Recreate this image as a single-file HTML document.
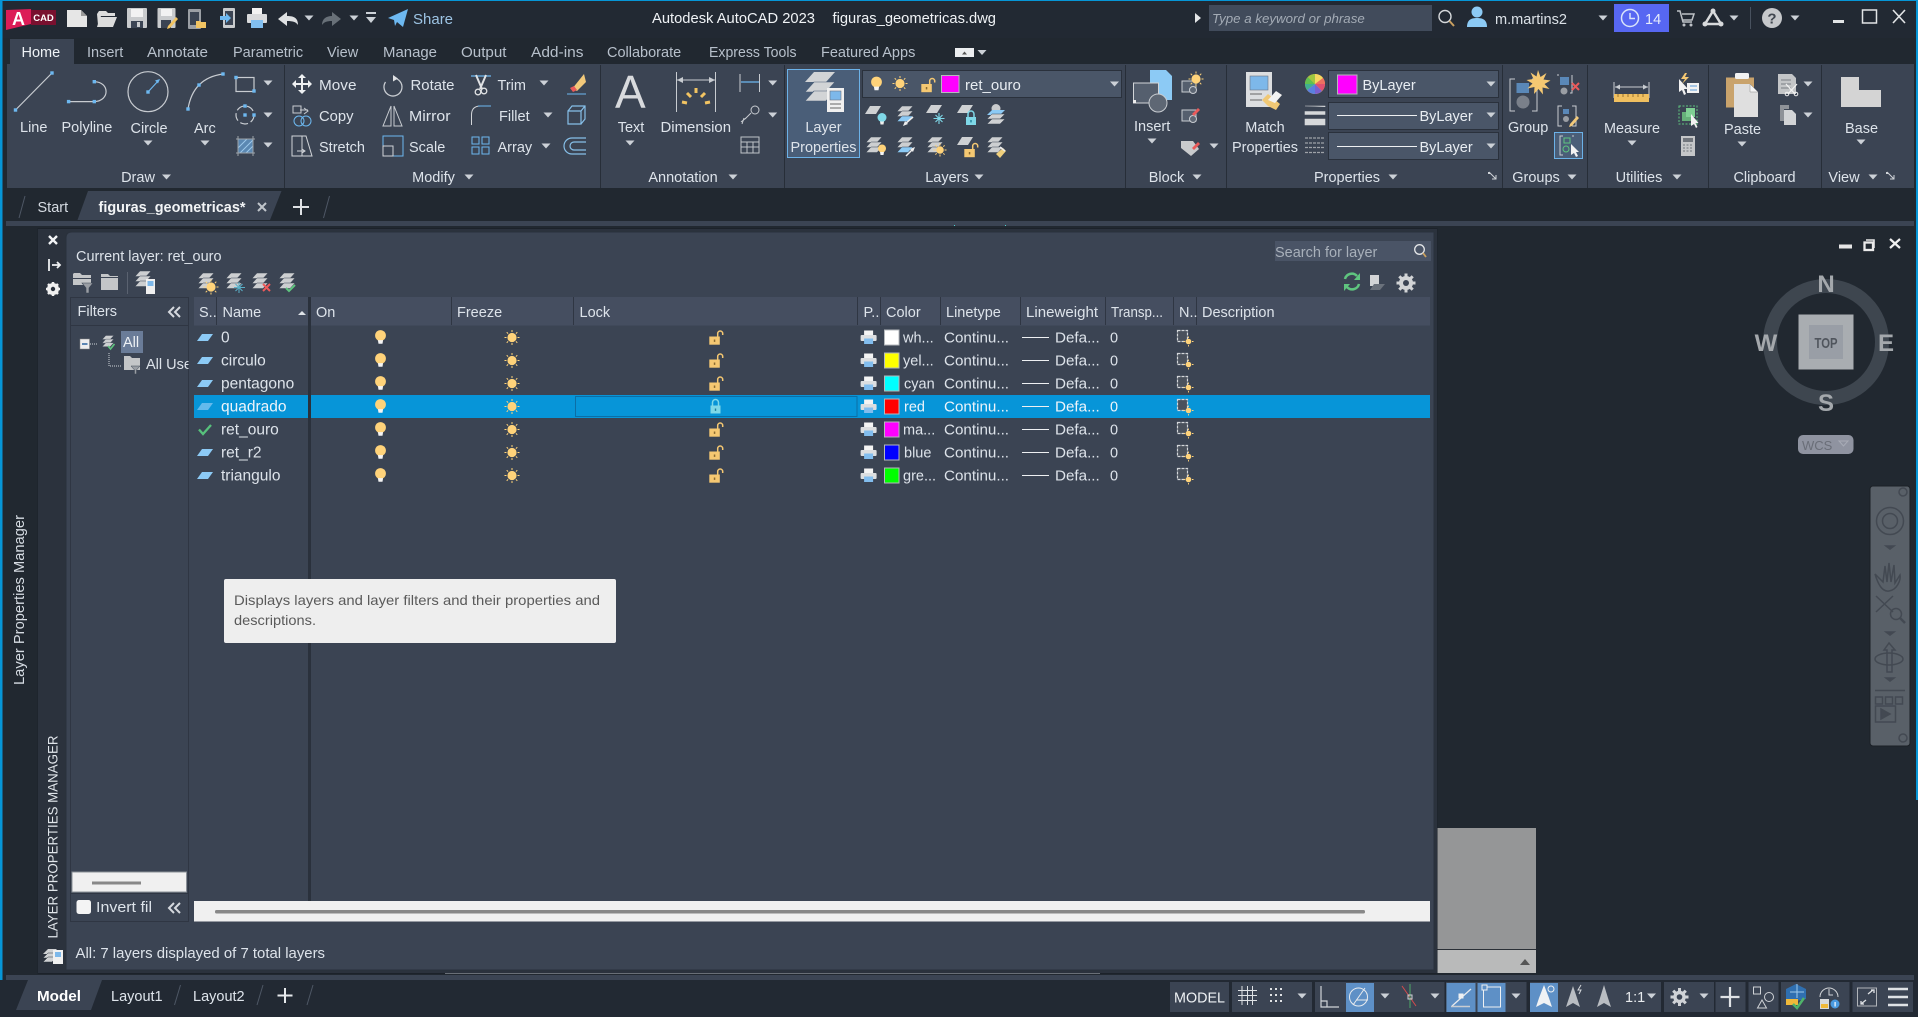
<!DOCTYPE html>
<html><head><meta charset="utf-8"><title>Autodesk AutoCAD 2023</title>
<style>
html,body{margin:0;padding:0;background:#212830;overflow:hidden}
svg{display:block;position:absolute;left:0;top:0}
text{font-family:"Liberation Sans",sans-serif;font-size:14.5px;fill:#dde3ea;white-space:pre}
.m{text-anchor:middle}
.b{font-weight:bold;fill:#fff}
.g{stroke:#c8ccd1;fill:none;stroke-width:1.2}
.n{font-size:15.5px}
.c{font-size:15.2px}
</style></head><body>
<svg width="1918" height="1017" viewBox="0 0 1918 1017" xmlns="http://www.w3.org/2000/svg">
<defs>
<clipPath id="c1"><rect x="140" y="350" width="48.5" height="30"/></clipPath>
<path id="dd" d="M-4.500-2.500h9l-4.500 5z" fill="#ccd1d7"/>
<rect id="bs" x="-1.7" y="-1.7" width="3.4" height="3.4" fill="#6db8f0"/>
<g id="bulb"><circle cy="-2" r="5.4" fill="#ffd37a"/><path d="M-2.6 2.6h5.2l-.6 3.6h-4z" fill="#f4f4f4"/></g>
<g id="sun"><circle r="4.6" fill="#ffd37a"/><path d="M0-7.5v2M0 5.5v2M-7.5 0h2M5.5 0h2M-5.3-5.3l1.4 1.4M3.9 3.9l1.4 1.4M-5.3 5.3l1.4-1.4M3.9-3.9l1.4-1.4" stroke="#ffd37a" stroke-width="1"/></g>
<g id="lock"><path d="M1.7-1V-4a2.500 2.500 0 0 1 5 0V-2.500" fill="none" stroke="#f5c872" stroke-width="1.500"/><rect x="-6.700" y="-1" width="10.500" height="8.200" fill="#f5c872"/><rect x="-2.200" y="2" width="1.500" height="2.400" fill="#8a6a30"/></g>
<g id="lockc"><path d="M-3-1V-4a3 3 0 0 1 6 0V-1" fill="none" stroke="#7fd8e8" stroke-width="1.500"/><rect x="-5" y="-1" width="10" height="8" fill="#7fd8e8"/><rect x="-.7" y="2" width="1.400" height="2.400" fill="#207f9a"/></g>
<g id="prn"><rect x="-4.500" y="-7" width="9" height="5" fill="#f4f4f4"/><rect x="-8" y="-2.500" width="16" height="6" rx="1" fill="#dcdee0"/><rect x="-4.500" y="1" width="9" height="5.500" fill="#82bdee"/></g>
<g id="nic"><path d="M-7-7h10v11h-10z" fill="#4a515c" stroke="#d4d7da" stroke-width="1.200" stroke-dasharray="3 1"/><g transform="translate(4 4)"><circle r="2.800" fill="#ffd37a"/><path d="M0-5v1.500M0 3.500v1.500M-5 0h1.500M3.500 0h1.500" stroke="#ffd37a" stroke-width=".9"/></g></g>
<path id="chip" d="M-8 3.500L-3-3.500H8L3 3.500z" fill="#8ccaf5"/>
<g id="ri"><use href="#bulb" x="380.500"/><use href="#sun" x="512"/><use href="#prn" x="868.600"/><path d="M1022 0h27" stroke="#eef0f2" stroke-width="1"/><use href="#nic" x="1184.500"/></g>
<g id="st" fill="#cdcfd1" stroke="#3b4453" stroke-width=".5"><path d="M-8-3.500L-3-9H8L3-3.500z"/><path d="M-8 1.500L-3-4H8L3 1.500z"/><path d="M-8 6.500L-3 1H8L3 6.500z"/></g>
<path id="pg" d="M-8 4L-3-4H8L3 4z" fill="#cfd1d3"/>
</defs>

<!-- base -->
<rect width="1918" height="1017" fill="#212830"/>
<rect width="1918" height="38" fill="#222933"/>

<!-- title bar icons -->
<path d="M6 10l25-1v15l-25 6z" fill="#dc1c57"/><rect x="31" y="10" width="25" height="15" fill="#79102f"/>
<text x="18.500" y="25" class="m b" style="font-size:18px">A</text><text x="43.500" y="21" class="m b" style="font-size:9.500px">CAD</text>
<path d="M67 10h14l6 6v11H67z" fill="#e6e6e6"/><path d="M81 10l6 6h-6z" fill="#9a9a9a"/>
<path d="M97 14l2-3h7l2 2h7v3h-14l-3 9z M100 17h17l-4 10H97z" fill="#dcdcdc"/>
<rect x="127" y="8" width="20" height="20" rx="1" fill="#c9cbcd"/><rect x="131" y="9" width="12" height="8" fill="#f2f2f2"/><rect x="131" y="21" width="12" height="7" fill="#3b4453"/><rect x="137" y="22" width="3" height="5" fill="#c9cbcd"/>
<rect x="157.500" y="8" width="18" height="20" rx="1" fill="#c9cbcd"/><rect x="161" y="9" width="11" height="7" fill="#f2f2f2"/><rect x="161" y="20" width="10" height="8" fill="#3b4453"/><path d="M168 26l8-9 2 2-8 9-3 1z" fill="#f2c462"/>
<rect x="188" y="9" width="13" height="20" rx="1" fill="#9b9fa5"/><rect x="190" y="12" width="9" height="13" fill="#3b4453"/><path d="M196 21h4l1 1h5v6h-10z" fill="#f2c462"/>
<rect x="223" y="8" width="12" height="20" rx="1" fill="#c9cbcd"/><rect x="225" y="11" width="8" height="14" fill="#3b4453"/><path d="M220 16h6v-3l5 5-5 5v-3h-6z" fill="#6db8f0"/>
<rect x="252" y="8" width="10" height="6" fill="#f2f2f2"/><rect x="247" y="14" width="20" height="9" rx="1" fill="#d9dadc"/><rect x="251" y="20" width="12" height="8" fill="#82bff0"/>
<path d="M278 19l9-7v4c7 0 11 2 11 9-2-3-5-4-11-4v5z" fill="#dfe1e3"/><use href="#dd" x="309" y="18"/>
<path d="M341 19l-9-7v4c-6 0-10 3-10 9 2-3 5-4 10-4v5z" fill="#687078"/><use href="#dd" x="354" y="18"/>
<path d="M366 12h10v2h-10zM366 17h10l-5 6z" fill="#ccd1d7"/>
<path d="M388 18L408 9l-5 18-6-5-2 4-1-6z" fill="#6db8f0"/>
<text x="413" y="24" style="fill:#9dc4e4;font-size:15px">Share</text>
<text x="652" y="23" textLength="163" lengthAdjust="spacingAndGlyphs" style="fill:#f0f3f6">Autodesk AutoCAD 2023</text>
<text x="832.500" y="23" textLength="163.500" lengthAdjust="spacingAndGlyphs" style="fill:#f0f3f6">figuras_geometricas.dwg</text>
<path d="M1195 13l6 5-6 5z" fill="#e4e6e8"/>
<rect x="1209" y="5" width="223" height="26" fill="#414b5b"/>
<text x="1212" y="23" style="font-style:italic;font-size:13.300px;fill:#a3abb5">Type a keyword or phrase</text>
<circle cx="1445" cy="16.500" r="6" fill="none" stroke="#d5d8db" stroke-width="1.400"/><path d="M1449.500 21l4.500 5" stroke="#c9a060" stroke-width="2"/>
<circle cx="1477" cy="12" r="5.500" fill="#8ccaf5"/><path d="M1467 27c0-7 4-9 10-9s10 2 10 9z" fill="#8ccaf5"/>
<text x="1495" y="24" textLength="72" lengthAdjust="spacingAndGlyphs" style="fill:#dbe1e7">m.martins2</text><use href="#dd" x="1603" y="18"/>
<rect x="1614" y="4" width="55" height="28" fill="#5767f2"/><circle cx="1630" cy="18" r="8.500" fill="none" stroke="#d9e4fa" stroke-width="1.500"/><path d="M1630 13v5.500h5" fill="none" stroke="#d9e4fa" stroke-width="1.500"/>
<text x="1645" y="24" style="fill:#e6ecfb">14</text>
<path d="M1677 11h3l3 11h9M1682 14h12l-2 6h-9" fill="none" stroke="#bdc1c6" stroke-width="1.500"/><circle cx="1684" cy="25" r="1.500" fill="#bdc1c6"/><circle cx="1691" cy="25" r="1.500" fill="#bdc1c6"/>
<path d="M1713 11l-8 13h16z" fill="none" stroke="#d8dadc" stroke-width="2.500"/><circle cx="1713" cy="11" r="2.500" fill="#d8dadc"/><circle cx="1705" cy="24" r="2.500" fill="#d8dadc"/><circle cx="1721" cy="24" r="2.500" fill="#d8dadc"/><use href="#dd" x="1734" y="18"/>
<path d="M1750.500 7v22" stroke="#48515e"/>
<circle cx="1772" cy="18" r="10" fill="#c6c8cb"/><text x="1772" y="23.500" class="m b" style="fill:#40464f;font-size:15px">?</text><use href="#dd" x="1795" y="18"/>
<rect x="1833" y="20" width="11" height="3" fill="#e2e4e6"/><rect x="1862.500" y="10" width="14" height="13" fill="none" stroke="#e2e4e6" stroke-width="1.500"/>
<path d="M1893 10l12 13M1905 10l-12 13" stroke="#e2e4e6" stroke-width="1.600"/>

<!-- ribbon tabs -->
<rect x="10" y="39" width="64" height="26" fill="#3b4453"/>
<text x="21.500" y="57" style="fill:#eef2f6">Home</text>
<text x="87" y="57" style="fill:#b7c0cb">Insert</text>
<text x="147" y="57" textLength="61" lengthAdjust="spacingAndGlyphs" style="fill:#b7c0cb">Annotate</text>
<text x="233" y="57" style="fill:#b7c0cb">Parametric</text>
<text x="327" y="57" style="fill:#b7c0cb">View</text>
<text x="383" y="57" textLength="54" lengthAdjust="spacingAndGlyphs" style="fill:#b7c0cb">Manage</text>
<text x="461" y="57" textLength="45.500" lengthAdjust="spacingAndGlyphs" style="fill:#b7c0cb">Output</text>
<text x="531" y="57" textLength="52.500" lengthAdjust="spacingAndGlyphs" style="fill:#b7c0cb">Add-ins</text>
<text x="607" y="57" style="fill:#b7c0cb">Collaborate</text>
<text x="709" y="57" textLength="87.500" lengthAdjust="spacingAndGlyphs" style="fill:#b7c0cb">Express Tools</text>
<text x="821" y="57" style="fill:#b7c0cb">Featured Apps</text>
<rect x="955" y="48" width="19" height="9" fill="#eceef0"/><path d="M962 54.500l2.500-3 2.500 3z" fill="#555"/><use href="#dd" x="982" y="52.500"/>

<!-- ribbon body -->
<rect x="7" y="64" width="1907" height="124" fill="#3b4453"/>
<path d="M284.500 65v123M600.500 65v123M784.500 65v123M1125.500 65v123M1226.500 65v123M1502.500 65v123M1587.500 65v123M1708.500 65v123M1821.500 65v123" stroke="#272e38" stroke-width="1"/>

<!-- draw -->
<path d="M15.500 110L52 73" class="g"/><use href="#bs" x="15.500" y="110"/><use href="#bs" x="52" y="73"/>
<text x="20" y="132">Line</text>
<path d="M68.600 101.600H94.300C110 101 110 82 94.300 81.700" class="g"/><use href="#bs" x="68.600" y="101.600"/><use href="#bs" x="94.300" y="101.600"/><use href="#bs" x="94.300" y="81.700"/>
<text x="61.500" y="132">Polyline</text>
<circle cx="148" cy="91.700" r="20" class="g"/><path d="M148 92l11-12" stroke="#6db8f0" stroke-width="1.200"/><use href="#bs" x="148" y="92"/><path d="M160 79l-5 1.500 3 3z" fill="#6db8f0"/>
<text x="130.500" y="133" textLength="37" lengthAdjust="spacingAndGlyphs">Circle</text><use href="#dd" x="148" y="143"/>
<path d="M188 109Q193 78 223 74" class="g"/><use href="#bs" x="188" y="109"/><use href="#bs" x="199" y="85"/><use href="#bs" x="223" y="74"/>
<text x="194" y="133">Arc</text><use href="#dd" x="205" y="143"/>
<rect x="236" y="77.500" width="18" height="14" class="g"/><use href="#bs" x="236" y="77.500"/><use href="#bs" x="254" y="91"/><use href="#dd" x="268" y="83"/>
<circle cx="245" cy="115" r="9" class="g" stroke-dasharray="8 3"/><use href="#bs" x="245" y="115"/><use href="#bs" x="245" y="106"/><use href="#bs" x="254" y="115"/><use href="#dd" x="268" y="115"/>
<rect x="238" y="139" width="15" height="14" fill="#5b88b2"/><path d="M238 148l9-9M240 153l13-13M246 153l7-7" stroke="#9cc8ea"/><path d="M236 139h19M236 153h19M238 136v20M253 136v20" stroke="#9ea4aa"/><use href="#dd" x="268" y="145"/>
<!-- modify -->
<path d="M302 74l4 4h-3v5h5v-3l4 4-4 4v-3h-5v5h3l-4 4-4-4h3v-5h-5v3l-4-4 4-4v3h5v-5h-3z" fill="#eef0f2"/>
<text x="319" y="90" textLength="37.500" lengthAdjust="spacingAndGlyphs">Move</text>
<path d="M293 106h8v7h-8zM304 108l4 3-4 3M300 110h8" fill="none" stroke="#c8ccd1"/><circle cx="299" cy="121" r="5" fill="none" stroke="#6db8f0"/><circle cx="306" cy="121" r="5" fill="none" stroke="#6db8f0"/>
<text x="319" y="121" textLength="34.500" lengthAdjust="spacingAndGlyphs">Copy</text>
<path d="M292 136h10v20h-10zM302 136h4l6 20h-10" fill="none" stroke="#d2d5d9"/><path d="M297 151h8m-3-2l3 2-3 2" fill="none" stroke="#d2d5d9"/>
<text x="319" y="152">Stretch</text>
<path d="M393 78a9 9 0 1 1-7.500 4" fill="none" stroke="#c8ccd1" stroke-width="1.300"/><path d="M393 75l5 3.500-5 3z" fill="#e0e2e4"/>
<text x="410.500" y="90" textLength="44" lengthAdjust="spacingAndGlyphs">Rotate</text>
<path d="M391 106v20h-8zM394 106v20h8z" fill="none" stroke="#c8ccd1"/>
<text x="409" y="121" textLength="41.500" lengthAdjust="spacingAndGlyphs">Mirror</text>
<rect x="383" y="136" width="20" height="20" fill="none" stroke="#6db8f0"/><rect x="383" y="146" width="10" height="10" fill="none" stroke="#d2d5d9"/>
<text x="409" y="152">Scale</text>
<path d="M471 76h20" stroke="#6db8f0" stroke-width="1.300"/><path d="M476 75l6 14M486 75l-6 14" stroke="#e0e2e4" stroke-width="2"/><circle cx="478" cy="92" r="2.800" fill="none" stroke="#e0e2e4" stroke-width="1.300"/><circle cx="484" cy="91" r="2.800" fill="none" stroke="#e0e2e4" stroke-width="1.300"/>
<text x="497.500" y="90">Trim</text><use href="#dd" x="544" y="83"/>
<path d="M471.500 125v-10q0-9 9-9h10.500" fill="none" stroke="#d2d5d9"/><path d="M478 106h13" stroke="#6db8f0"/>
<text x="499" y="121">Fillet</text><use href="#dd" x="548" y="115"/>
<path d="M472 137h7v7h-7zM482 137h7v7h-7zM472 147h7v7h-7zM482 147h7v7h-7z" fill="none" stroke="#6db8f0"/>
<text x="497.500" y="152">Array</text><use href="#dd" x="546" y="146"/>
<path d="M572 89l12-15 2 8-9 9z" fill="#f2c97a"/><path d="M570 88l4-2 3 4-4 2z" fill="#e95a5a"/><path d="M567 94h19" stroke="#6db8f0"/>
<path d="M568 111h13v13h-13zM568 111l4-5h13v13l-4 5M581 111l4-5" fill="none" stroke="#86bfe8" stroke-width="1.200"/>
<path d="M586 142h-12a4 4 0 0 0 0 8h12M586 138h-14a8 8 0 0 0 0 16h14" fill="none" stroke="#86bfe8" stroke-width="1.200"/>
<!-- annotation -->
<text x="615" y="108" style="font-size:46px;fill:#d8dadd">A</text>
<text x="631" y="132" class="m">Text</text><use href="#dd" x="630" y="143"/>
<path d="M676.500 72v40M715.500 72v40" stroke="#c8ccd1"/><path d="M677 80h38" stroke="#c8ccd1"/><path d="M677 80l6-3v6zM715 80l-6-3v6z" fill="#c8ccd1"/>
<g stroke="#f2c462" stroke-width="3"><path d="M687 103l-5-1M691 97l-4-4M696 93v-5M701 97l4-4M705 103l5-1"/></g>
<text x="660.500" y="132" textLength="70.500" lengthAdjust="spacingAndGlyphs">Dimension</text>
<path d="M740 74v18M759.500 74v18" stroke="#c8ccd1"/><path d="M741 82h18" stroke="#6db8f0" stroke-width="1.300"/><use href="#dd" x="772.700" y="83"/>
<path d="M741 122l5-4" stroke="#c8ccd1"/><path d="M742 124l2-6" stroke="#c8ccd1"/><circle cx="755" cy="110" r="4" fill="none" stroke="#c8ccd1"/><path d="M751 113l-6 6" stroke="#c8ccd1"/><use href="#dd" x="772.700" y="115"/>
<path d="M741 137h18v16h-18zM741 142h18M741 147h18M747 142v11M753 142v11" fill="none" stroke="#bfc3c8"/>
<text x="683" y="182" class="m">Annotation</text><use href="#dd" x="733" y="177"/>
<!-- layers -->
<rect x="787.500" y="69.500" width="72" height="88" fill="#4a5e78" stroke="#6cb2e8"/>
<g transform="translate(820 78) scale(1.500 1)"><path d="M-10 4L-4-6H10L4 4z" fill="#d2d4d6"/></g><g transform="translate(820 88) scale(1.500 1)"><path d="M-10 4L-4-6H10L4 4z" fill="#d2d4d6" stroke="#4a5e78" stroke-width=".6"/></g><g transform="translate(820 97) scale(1.500 1)"><path d="M-10 4L-4-6H10L4 4z" fill="#d2d4d6" stroke="#4a5e78" stroke-width=".6"/></g>
<rect x="827" y="88" width="17" height="24" fill="#f0f0f0"/><rect x="830" y="91" width="11" height="9" fill="#7db8ea" stroke="#6b7280" stroke-width=".6"/><path d="M830 104h11M830 108h11" stroke="#666"/>
<text x="823.500" y="132" class="m">Layer</text><text x="823.500" y="152" class="m" textLength="66" lengthAdjust="spacingAndGlyphs">Properties</text>
<rect x="862.500" y="70.500" width="259" height="27" fill="#4a5668" stroke="#2a313c"/>
<use href="#bulb" x="876.500" y="84"/><use href="#sun" x="900" y="83.500"/><use href="#lock" x="928" y="85"/>
<rect x="941.500" y="75.500" width="17.500" height="17" fill="#f0f" stroke="#b5b9bd"/>
<text x="965" y="90" style="font-size:15px;fill:#e8edf2">ret_ouro</text><use href="#dd" x="1114.500" y="84"/>
<!-- layer row 2 -->
<use href="#pg" x="873" y="110"/><g transform="translate(882 117.500)"><circle r="4.500" fill="#7fd8e8"/><path d="M-2 4h4l-.5 3h-3z" fill="#eee"/></g>
<g transform="translate(905 115)"><path d="M-8-3.500L-3-9H8L3-3.500z" fill="#cdcfd1" stroke="#3b4453" stroke-width=".5"/><path d="M-8 1.500L-3-4H8L3 1.500z" fill="#cdcfd1" stroke="#3b4453" stroke-width=".5"/><path d="M-8 6.500L-3 1H8L3 6.500z" fill="#8ccaf5" stroke="#3b4453" stroke-width=".5"/></g><path d="M905 124l8-7" stroke="#eee" stroke-width="1.500"/><path d="M903 126l2-5 3 3z" fill="#eee"/>
<use href="#pg" x="934" y="109"/><path d="M939 113v11M933.500 118.500h11M935.500 115l7 7M942.500 115l-7 7" stroke="#7fd8e8" stroke-width="1.100"/>
<use href="#pg" x="965" y="109"/><use href="#lockc" x="971" y="118"/>
<circle cx="996" cy="108.500" r="4.500" fill="#c9cbcd"/><g transform="translate(996 116)"><path d="M-9-1L-4-6H9L4-1z" fill="#8ccaf5"/><path d="M-9 3L-4-2H9L4 3z" fill="#cfd1d3" stroke="#3b4453" stroke-width=".5"/><path d="M-9 8L-4 3H9L4 8z" fill="#cfd1d3" stroke="#3b4453" stroke-width=".5"/></g>
<!-- layer row 3 -->
<use href="#st" x="874" y="146"/><g transform="translate(882 149)"><circle r="4" cy="-.5" fill="#ffd37a"/><path d="M-2 3h4l-.5 3h-3z" fill="#f4f4f4"/></g>
<g transform="translate(905 146)"><path d="M-8-3.500L-3-9H8L3-3.500z" fill="#cdcfd1" stroke="#3b4453" stroke-width=".5"/><path d="M-8 1.500L-3-4H8L3 1.500z" fill="#cdcfd1" stroke="#3b4453" stroke-width=".5"/><path d="M-8 6.500L-3 1H8L3 6.500z" fill="#8ccaf5" stroke="#3b4453" stroke-width=".5"/></g><path d="M906 156l7-7" stroke="#eee" stroke-width="1.500"/><path d="M915 147l-2 5-3-3z" fill="#eee"/>
<use href="#st" x="935" y="146"/><g transform="translate(940 150)"><circle r="3.800" fill="#ffd37a"/><path d="M0-6.500v2M0 4.500v2M-6.500 0h2M4.500 0h2M-4.600-4.600l1.300 1.300M3.300 3.300l1.300 1.300M-4.600 4.600l1.300-1.300M3.300-3.300l1.300-1.300" stroke="#ffd37a"/></g>
<use href="#pg" x="965" y="141"/><use href="#lock" x="971" y="150"/>
<use href="#st" x="995" y="146"/><path d="M996 154l7-6 3 3-6 7z" fill="#f0d07c"/><path d="M1000 147l5 4" stroke="#eee" stroke-width="1.500"/>
<text x="947" y="182" class="m">Layers</text><use href="#dd" x="979" y="177"/>
<!-- block -->
<path d="M1150 70h16l6 6v24h-22z" fill="#8ccaf5"/><rect x="1133.500" y="83" width="25" height="20" fill="#555f6e" stroke="#d2d5d8"/><rect x="1133" y="100" width="3" height="3" fill="#eee"/><circle cx="1158" cy="103" r="9" fill="#5e6774" stroke="#c8ccd1"/>
<text x="1134" y="131">Insert</text><use href="#dd" x="1152" y="141"/>
<rect x="1182" y="81" width="14" height="11" fill="#555f6e" stroke="#c8ccd1"/><circle cx="1193" cy="90" r="3.500" fill="#5e6774" stroke="#c8ccd1"/><use href="#sun" x="1196" y="79"/>
<rect x="1182" y="110" width="14" height="11" fill="#555f6e" stroke="#c8ccd1"/><circle cx="1193" cy="119" r="3.500" fill="#5e6774" stroke="#c8ccd1"/><path d="M1192 114l6-6 2 2-6 6z" fill="#e95a5a"/>
<path d="M1181 141h12l6 8-8 7-10-8z" fill="#c9cbcd"/><path d="M1192 148l6-6 2 2-6 6z" fill="#e95a5a"/><use href="#dd" x="1214" y="146"/>
<text x="1166.500" y="182" class="m">Block</text><use href="#dd" x="1197" y="177"/>
<!-- properties -->
<rect x="1246" y="72" width="26" height="35" fill="#dcdee0"/><rect x="1250" y="76" width="18" height="14" fill="#7db8ea" stroke="#6b7280" stroke-width=".6"/><path d="M1250 94h12M1250 100h12" stroke="#666"/><path d="M1268 106l-6-6 6-6 12 10-4 6z" fill="#f0c875"/><path d="M1268 100l8-9 6 4-7 8z" fill="#f2f2f2"/>
<text x="1265" y="132" class="m">Match</text><text x="1265" y="152" class="m">Properties</text>
<circle cx="1315" cy="84" r="10" fill="#f0b24a"/><path d="M1315 84V74a10 10 0 0 1 8 4z" fill="#f7d860"/><path d="M1315 84l8-6a10 10 0 0 1 2 6z" fill="#ee7060"/><path d="M1315 84h10a10 10 0 0 1-3 7z" fill="#e05070"/><path d="M1315 84l7 7a10 10 0 0 1-7 3z" fill="#7a60d0"/><path d="M1315 84v10a10 10 0 0 1-8-4z" fill="#5a80e0"/><path d="M1315 84l-8 6a10 10 0 0 1-2-6z" fill="#40b090"/><path d="M1315 84h-10a10 10 0 0 1 3-7z" fill="#60c050"/><path d="M1315 84l-7-7a10 10 0 0 1 7-3z" fill="#a0c840"/>
<path d="M1305 106h20v1M1305 111.500h20v3h-20zM1305 119h20v6h-20z" fill="#d6d8da" stroke="#d6d8da" stroke-width=".6"/>
<path d="M1305 138h20M1305 143h20M1305 147.500h20M1305 152.500h20" stroke="#9ea2a8" stroke-dasharray="3 1" stroke-width="1.300"/>
<g fill="#4a5668" stroke="#2a313c"><rect x="1328.500" y="70.500" width="170" height="27"/><rect x="1328.500" y="102.500" width="170" height="27"/><rect x="1328.500" y="132.500" width="170" height="27"/></g>
<rect x="1337.500" y="75" width="19.500" height="19" fill="#f0f" stroke="#b5b9bd"/>
<text x="1362.500" y="90" style="fill:#e8edf2">ByLayer</text><use href="#dd" x="1491" y="84"/>
<path d="M1337 115.500h80M1337 146.500h80" stroke="#eef0f2"/>
<text x="1419.500" y="121" style="fill:#e8edf2">ByLayer</text><use href="#dd" x="1491" y="115"/>
<text x="1419.500" y="152" style="fill:#e8edf2">ByLayer</text><use href="#dd" x="1491" y="146"/>
<text x="1347" y="182" class="m">Properties</text><use href="#dd" x="1393" y="177"/>
<path d="M1489 172l7 7M1496 175v4h-4" fill="none" stroke="#cfd3d8"/><rect x="1488" y="172" width="2" height="2" fill="#cfd3d8"/>
<!-- groups -->
<path d="M1515 79h-5v32h5M1532 79h5v32h-5" fill="none" stroke="#c8ccd1"/><rect x="1516.500" y="83" width="12.500" height="10" fill="#5a88b8"/><circle cx="1523" cy="102" r="6.500" fill="#7a808a"/>
<path d="M1538 70l2.500 7 6-4-3 6.500 7 1-6 3.500 5 5-7-1.500.5 7-4.500-5.500-4.500 5 .5-7-7 1.500 5-5-6-3.500 7-1-3-6.500 6 4z" fill="#f5c872"/>
<text x="1508" y="132">Group</text>
<rect x="1560" y="77" width="9" height="8" fill="#5a88b8"/><circle cx="1564" cy="91" r="3.500" fill="#9a9ea4"/><path d="M1559 75h-2M1572 75v18h-2" stroke="#c8ccd1" fill="none"/><path d="M1572 83l7 7M1579 83l-7 7" stroke="#e95a5a" stroke-width="2"/>
<path d="M1562 106h-4v20h4M1572 106h4v20h-4" fill="none" stroke="#c8ccd1"/><rect x="1563" y="109" width="6" height="5" fill="#5a88b8"/><circle cx="1566" cy="119" r="3" fill="#9a9ea4"/><path d="M1570 124l7-8 2 2-7 8-3 1z" fill="#f2c97a"/>
<rect x="1554.500" y="132.500" width="28" height="26" fill="#4a5e78" stroke="#6cb2e8"/><path d="M1563 136h-3v19h3M1572 136h2" fill="none" stroke="#c8ccd1"/><rect x="1564" y="138" width="6" height="5" fill="none" stroke="#5fc57f"/><circle cx="1566" cy="149" r="3" fill="none" stroke="#5fc57f"/><path d="M1571 144v11l3-2 2 4 2-1-2-4h3z" fill="#f2f2f2"/>
<text x="1536" y="182" class="m">Groups</text><use href="#dd" x="1572" y="177"/>
<!-- utilities -->
<path d="M1614 82v16M1649 82v16M1615 87h33" stroke="#c8ccd1"/><path d="M1615 87l5-2.500v5zM1648 87l-5-2.500v5z" fill="#c8ccd1"/>
<rect x="1614" y="94" width="35" height="8" fill="#f0c060"/><path d="M1618 94v3M1623 94v3M1628 94v3M1633 94v3M1638 94v3M1643 94v3" stroke="#9a7430"/>
<text x="1604" y="133" textLength="56" lengthAdjust="spacingAndGlyphs">Measure</text><use href="#dd" x="1632" y="143"/>
<path d="M1679 79v13l3-2 2 5 2-1-2-5h4z" fill="#f2f2f2"/><path d="M1685 73l-4 6h4l-3 5 7-7h-4l2-4z" fill="#f5c872"/><rect x="1687" y="83" width="12" height="10" fill="#f2f2f2"/><path d="M1690 86h7M1690 90h7" stroke="#5a9ad8"/>
<rect x="1679" y="106" width="18" height="18" fill="none" stroke="#5fc57f" stroke-dasharray="2 1.500"/><rect x="1682" y="112" width="9" height="9" fill="#66b07a"/><rect x="1686" y="108" width="9" height="9" fill="#7fcf94"/><path d="M1691 114v12l3-2 2 4 1.500-1-2-4h3z" fill="#f2f2f2"/>
<rect x="1681" y="136" width="14" height="20" fill="#c4c6c8"/><rect x="1683" y="138" width="10" height="4" fill="#70757c"/><path d="M1683 145h10M1683 148h10M1683 151h10" stroke="#70757c" stroke-dasharray="2 1.500"/>
<text x="1639" y="182" class="m">Utilities</text><use href="#dd" x="1677" y="177"/>
<!-- clipboard -->
<rect x="1726" y="77.500" width="28" height="30" fill="#c9a36c"/><rect x="1735" y="73" width="14" height="6" rx="1.500" fill="#f2f2f2"/><path d="M1734 84h16l8 8v25h-24z" fill="#dfdfdf"/><path d="M1750 84l8 8h-8z" fill="#f5f5f5" stroke="#8a8a8a" stroke-width=".5"/>
<text x="1724" y="134">Paste</text><use href="#dd" x="1742" y="144"/>
<path d="M1778 74h14l4 4v16h-18z" fill="#c4c6c8"/><path d="M1781 80h10M1781 84h10M1781 88h10" stroke="#7a7e84"/><path d="M1786 84l9 10M1797 84l-9 10" stroke="#f2f2f2" stroke-width="1.300"/><circle cx="1787" cy="94" r="1.800" fill="none" stroke="#f2f2f2"/><circle cx="1796" cy="94" r="1.800" fill="none" stroke="#f2f2f2"/>
<use href="#dd" x="1808" y="84"/>
<path d="M1780 105h9v4h-5v12h-4z" fill="#8e9298"/><path d="M1784 110h8l4 4v11h-12z" fill="#d2d4d6"/><use href="#dd" x="1808" y="115"/>
<text x="1764.500" y="182" class="m">Clipboard</text>
<!-- view -->
<path d="M1841 77h18v13h22v17h-40z" fill="#d4d4d4"/>
<text x="1845" y="133">Base</text><use href="#dd" x="1861" y="142"/>
<text x="1844" y="182" class="m">View</text><use href="#dd" x="1873" y="177"/>
<path d="M1887 172l7 7M1894 175v4h-4" fill="none" stroke="#cfd3d8"/><rect x="1886" y="172" width="2" height="2" fill="#cfd3d8"/>
<text x="138" y="182" class="m">Draw</text><use href="#dd" x="166.500" y="177"/>
<text x="433.500" y="182" class="m">Modify</text><use href="#dd" x="469" y="177"/>

<!-- file tabs -->
<path d="M77.500 220L88 191H281.500L270 220z" fill="#3b4453"/>
<text x="37.500" y="212" style="fill:#d5dbe2">Start</text>
<text x="98.500" y="212" class="b" textLength="147" lengthAdjust="spacingAndGlyphs" style="fill:#f2f4f6">figuras_geometricas*</text>
<path d="M258 203l8 8M266 203l-8 8" stroke="#c0c5cb" stroke-width="2"/>
<path d="M301 199v16M293 207h16" stroke="#dfe2e5" stroke-width="2"/>
<path d="M19 218l6-22M323.500 218l6-22" stroke="#4e5765"/>
<rect x="6" y="221" width="1908" height="5" fill="#3b4453"/>
<rect x="954" y="225" width="1" height="1" fill="#4fd0d0"/><rect x="1005" y="225" width="1" height="1" fill="#4fd0d0"/>

<!-- gray block -->
<rect x="1430" y="828" width="106" height="121" fill="#959697"/><rect x="1430" y="949" width="106" height="1" fill="#2a2f36"/><rect x="1430" y="950" width="106" height="23" fill="#b9baba"/><path d="M1520 965l5-6 5 6z" fill="#555"/>

<!-- palette -->
<rect x="37.500" y="228" width="1400" height="746" fill="#1c222a"/>
<rect x="38" y="229" width="1399" height="744" fill="#2b323d"/>
<path d="M66 970V238q0-6 6-6h1362v738z" fill="#3b4453" stroke="#2a313c"/>
<path d="M49 236l8 8M57 236l-8 8" stroke="#f2f4f6" stroke-width="2.400"/>
<path d="M49 259v12M52 265h8m-3-3l3 3-3 3" fill="none" stroke="#eef0f2" stroke-width="1.800"/>
<g transform="translate(53 289)"><circle r="4.500" fill="none" stroke="#f0f0f0" stroke-width="3"/><path d="M0-7v14M-7 0h14M-5-5l10 10M5-5L-5 5" stroke="#f0f0f0" stroke-width="2.500"/><circle r="2.200" fill="#2b323d"/></g>
<text transform="translate(24 685) rotate(-90)" textLength="170" lengthAdjust="spacingAndGlyphs" style="fill:#d6dce3">Layer Properties Manager</text>
<text transform="translate(57.500 938.500) rotate(-90)" textLength="203" lengthAdjust="spacingAndGlyphs" style="font-size:13.500px;fill:#e0e5ea">LAYER PROPERTIES MANAGER</text>
<g transform="translate(50 955)"><path d="M-7-1L-2-6H7L2-1z" fill="#cfd1d3"/><path d="M-7 3L-2-2H7L2 3z" fill="#cfd1d3" stroke="#2b323d" stroke-width=".5"/><path d="M-7 7L-2 2H7L2 7z" fill="#cfd1d3" stroke="#2b323d" stroke-width=".5"/></g><rect x="53" y="950" width="10" height="14" fill="#f0f0f0"/><rect x="55" y="952" width="6" height="5" fill="#7db8ea"/>

<text x="76" y="261" textLength="145.500" lengthAdjust="spacingAndGlyphs">Current layer: ret_ouro</text>
<!-- palette toolbar -->
<path d="M73 274l1-1h6l2 2h9v3h-18z" fill="#c4c6c8"/><path d="M73 279h18v6h-18z" fill="#c4c6c8"/><path d="M82 283h11l-4 5v5l-3 0v-5z" fill="#9a9ea4" stroke="#3b4453" stroke-width=".6"/>
<path d="M101 274h7l2 2h8v14h-17z" fill="#c4c6c8"/><path d="M101 277h17v1h-17z" fill="#3b4453"/>
<path d="M127.500 272v22" stroke="#5a6270"/>
<use href="#st" x="143" y="280"/><rect x="146" y="279" width="9" height="15" fill="#f0f0f0"/><rect x="147.500" y="281" width="6" height="5" fill="#7db8ea"/>
<use href="#st" x="206" y="282"/><use href="#sun" x="211" y="287"/>
<use href="#st" x="234" y="282"/><path d="M239 282v11M234 287.500h11M235.500 284l7 7M242.500 284l-7 7" stroke="#5ab0c8" stroke-width="1"/>
<use href="#st" x="260" y="282"/><path d="M263 284l7 7M270 284l-7 7" stroke="#ee5a5a" stroke-width="2"/>
<use href="#st" x="287" y="282"/><path d="M286 288l3 3 6-6" fill="none" stroke="#5fc57f" stroke-width="2"/>
<!-- search -->
<rect x="1275" y="241" width="156" height="20" fill="#4a5466"/>
<text x="1275" y="257" style="fill:#a8b0ba">Search for layer</text>
<circle cx="1419.500" cy="249.500" r="4.800" fill="none" stroke="#e4e6e8" stroke-width="1.300"/><path d="M1423 253l3 4" stroke="#c9a060" stroke-width="1.800"/>
<!-- right toolbar -->
<path d="M1345 279a7 7 0 0 1 12-3M1359 284a7 7 0 0 1-12 3" fill="none" stroke="#5fc57f" stroke-width="2.500"/><path d="M1360 273v7h-6zM1344 291v-7h6z" fill="#5fc57f"/>
<rect x="1370" y="275" width="9" height="11" fill="#d2d4d6"/><path d="M1370 290l4-6h11l-5 6z" fill="#6a717b"/>
<g transform="translate(1406 283)"><circle r="5" fill="none" stroke="#d2d4d6" stroke-width="4"/><path d="M0-9.500v19M-9.500 0h19M-6.700-6.700l13.400 13.400M6.700-6.700L-6.700 6.700" stroke="#d2d4d6" stroke-width="3"/><circle r="3" fill="#3b4453"/></g>

<!-- filter panel -->
<rect x="70.500" y="297.500" width="118" height="624" fill="none" stroke="#2f3643"/>
<path d="M70 325.500h118M70 893.500h118" stroke="#2f3643"/>
<text x="77.500" y="316">Filters</text>
<path d="M174 307l-5 5 5 5M180 307l-5 5 5 5" fill="none" stroke="#d5d9de" stroke-width="2"/>
<rect x="80" y="339" width="9.500" height="10" fill="#eee" stroke="#888" stroke-width=".5"/><path d="M82 344h5.500" stroke="#1e5a9a" stroke-width="1.400"/>
<path d="M90 344h7" stroke="#cfd3d8" stroke-dasharray="1 1"/>
<use href="#st" transform="translate(108 342) scale(.72)"/><path d="M108 346l2.500 3 4-5" fill="none" stroke="#5fc57f" stroke-width="1.600"/>
<rect x="121" y="331" width="22" height="22" fill="#6a7c98"/><text x="123" y="347" style="fill:#eef2f6">All</text>
<path d="M109 353v13h12" fill="none" stroke="#cfd3d8" stroke-dasharray="1 1"/>
<path d="M124 356h6l2 2h8v12h-16z" fill="#c4c6c8"/><path d="M131 366h9l-3.500 4v4h-2v-4z" fill="#9a9ea4" stroke="#3b4453" stroke-width=".5"/>
<text x="146" y="369" clip-path="url(#c1)">All Used</text>
<rect x="72" y="872" width="114.500" height="20" fill="#f0f0f0" stroke="#8a8f96"/><rect x="92" y="881.500" width="49" height="3" fill="#888"/>
<rect x="76.500" y="900" width="14.500" height="14" rx="2.500" fill="#f4f4f4"/>
<text x="96" y="912" textLength="56" lengthAdjust="spacingAndGlyphs">Invert fil</text>
<path d="M174 903l-5 5 5 5M180 903l-5 5 5 5" fill="none" stroke="#d5d9de" stroke-width="2"/>

<!-- grid header -->
<rect x="194" y="297" width="1236" height="28.500" fill="#454e60"/>
<path d="M216.500 297v28M451.500 297v28M573.500 297v28M857.500 297v28M880.500 297v28M940.500 297v28M1020.500 297v28M1105.500 297v28M1173.500 297v28M1196.500 297v28" stroke="#2f3643"/>
<rect x="308" y="297" width="3" height="604" fill="#2a313c"/>
<text x="199" y="317">S..</text><text x="222.500" y="317">Name</text><path d="M298 315l4-4 4 4z" fill="#dfe3e8"/>
<text x="316" y="317">On</text><text x="457" y="317">Freeze</text><text x="579.500" y="317">Lock</text>
<text x="863.500" y="317">P..</text><text x="886" y="317">Color</text><text x="946" y="317">Linetype</text>
<text x="1026" y="317" textLength="72" lengthAdjust="spacingAndGlyphs">Lineweight</text><text x="1111" y="317" textLength="52" lengthAdjust="spacingAndGlyphs">Transp...</text><text x="1179" y="317">N..</text><text x="1202" y="317">Description</text>

<!-- highlight -->
<rect x="194" y="395" width="114" height="23" fill="#0795d8"/><rect x="311" y="395" width="1119" height="23" fill="#0795d8"/>
<rect x="575.500" y="396.500" width="281.500" height="20" fill="none" stroke="#0b6ea6"/>

<!-- rows -->
<g transform="translate(0 337.500)"><use href="#chip" x="205"/><text x="221" y="5" class="n">0</text><use href="#ri"/><use href="#lock" x="716"/><rect x="884.500" y="-7.500" width="14.500" height="15" fill="#fff" stroke="#b5b9bd"/><text x="903" y="5">wh...</text><text x="944" y="5" class="c">Continu...</text><text x="1055" y="5" class="c">Defa...</text><text x="1110" y="5">0</text></g>
<g transform="translate(0 360.500)"><use href="#chip" x="205"/><text x="221" y="5" class="n">circulo</text><use href="#ri"/><use href="#lock" x="716"/><rect x="884.500" y="-7.500" width="14.500" height="15" fill="#ff0" stroke="#b5b9bd"/><text x="903" y="5">yel...</text><text x="944" y="5" class="c">Continu...</text><text x="1055" y="5" class="c">Defa...</text><text x="1110" y="5">0</text></g>
<g transform="translate(0 383.500)"><use href="#chip" x="205"/><text x="221" y="5" class="n">pentagono</text><use href="#ri"/><use href="#lock" x="716"/><rect x="884.500" y="-7.500" width="14.500" height="15" fill="#0ff" stroke="#b5b9bd"/><text x="904" y="5">cyan</text><text x="944" y="5" class="c">Continu...</text><text x="1055" y="5" class="c">Defa...</text><text x="1110" y="5">0</text></g>
<g transform="translate(0 406.500)"><use href="#chip" x="205" style="opacity:.7"/><text x="221" y="5" class="n" style="fill:#eef4fa">quadrado</text><use href="#ri"/><use href="#lockc" x="715.500"/><rect x="884.500" y="-7.500" width="14.500" height="15" fill="#f00" stroke="#b5b9bd"/><text x="904" y="5" style="fill:#eef4fa">red</text><text x="944" y="5" class="c" style="fill:#eef4fa">Continu...</text><text x="1055" y="5" class="c" style="fill:#eef4fa">Defa...</text><text x="1110" y="5" style="fill:#eef4fa">0</text></g>
<g transform="translate(0 429.500)"><path d="M199 0l4 4.500 8-9" fill="none" stroke="#57c17c" stroke-width="2.300"/><text x="221" y="5" class="n">ret_ouro</text><use href="#ri"/><use href="#lock" x="716"/><rect x="884.500" y="-7.500" width="14.500" height="15" fill="#f0f" stroke="#b5b9bd"/><text x="903" y="5">ma...</text><text x="944" y="5" class="c">Continu...</text><text x="1055" y="5" class="c">Defa...</text><text x="1110" y="5">0</text></g>
<g transform="translate(0 452.500)"><use href="#chip" x="205"/><text x="221" y="5" class="n">ret_r2</text><use href="#ri"/><use href="#lock" x="716"/><rect x="884.500" y="-7.500" width="14.500" height="15" fill="#00f" stroke="#b5b9bd"/><text x="904" y="5">blue</text><text x="944" y="5" class="c">Continu...</text><text x="1055" y="5" class="c">Defa...</text><text x="1110" y="5">0</text></g>
<g transform="translate(0 475.500)"><use href="#chip" x="205"/><text x="221" y="5" class="n">triangulo</text><use href="#ri"/><use href="#lock" x="716"/><rect x="884.500" y="-7.500" width="14.500" height="15" fill="#0f0" stroke="#b5b9bd"/><text x="903" y="5">gre...</text><text x="944" y="5" class="c">Continu...</text><text x="1055" y="5" class="c">Defa...</text><text x="1110" y="5">0</text></g>

<!-- scrollbar -->
<rect x="194" y="901" width="1236" height="20.500" fill="#f0f0f0"/><rect x="215" y="910" width="1150" height="3.500" rx="1.500" fill="#888"/>
<text x="75.500" y="958" textLength="249.500" lengthAdjust="spacingAndGlyphs">All: 7 layers displayed of 7 total layers</text>

<!-- tooltip -->
<rect x="224" y="579" width="392" height="64" rx="2" fill="#eeeeee"/>
<text x="234" y="605" textLength="366" lengthAdjust="spacingAndGlyphs" style="fill:#5a5a5a;font-size:14px">Displays layers and layer filters and their properties and</text>
<text x="234" y="625" textLength="82" lengthAdjust="spacingAndGlyphs" style="fill:#5a5a5a;font-size:14px">descriptions.</text>

<!-- viewport controls -->
<rect x="1839" y="244.500" width="13" height="4" fill="#e6e6e6"/>
<path d="M1866 240h8v8" fill="none" stroke="#e6e6e6" stroke-width="1.600"/><rect x="1864.500" y="242.500" width="8.500" height="7.500" fill="none" stroke="#eaeaea" stroke-width="2.300"/>
<path d="M1890 239l10 9M1900 239l-10 9" stroke="#f0f0f0" stroke-width="2.200"/>
<!-- viewcube -->
<circle cx="1826" cy="342" r="56" fill="none" stroke="#3e464f" stroke-width="14"/>
<rect x="1798.500" y="314.500" width="55" height="55" fill="#a9adb1"/><rect x="1809" y="325" width="34" height="34" fill="#999ea6"/>
<text x="1826" y="348" class="m" textLength="23" lengthAdjust="spacingAndGlyphs" style="font-weight:bold;font-size:15px;fill:#50555d">TOP</text>
<text x="1826" y="292" class="m" style="font-weight:bold;font-size:24px;fill:#a4a8ac">N</text><text x="1826" y="411" class="m" style="font-weight:bold;font-size:24px;fill:#a4a8ac">S</text><text x="1766" y="351" class="m" style="font-weight:bold;font-size:24px;fill:#a4a8ac">W</text><text x="1886" y="351" class="m" style="font-weight:bold;font-size:24px;fill:#a4a8ac">E</text>
<rect x="1798" y="435" width="55.500" height="19" rx="5" fill="#8f93a0"/><text x="1802" y="450" style="font-size:13px;fill:#6a6e78">WCS</text><path d="M1839 441h9l-4.500 5z" fill="none" stroke="#a8abb6"/>
<!-- nav bar -->
<rect x="1870" y="486" width="40" height="260" rx="3" fill="#596068" stroke="#1b2026"/>
<g fill="none" stroke="#434952" stroke-width="1.500">
<circle cx="1903" cy="492" r="4"/>
<circle cx="1890" cy="521" r="13.500"/><circle cx="1890" cy="521" r="7.500"/>
<path d="M1886 546h8l-4 3z" fill="#434952"/>
<path d="M1875 574l8 8 2-16 2 16 2-19 2 19 3-17 1 18 5-8c1 5-3 15-11 16-7 1-11-7-14-17z"/>
<path d="M1876 596l17 16M1893 596l-17 16"/><circle cx="1896" cy="614" r="5.500"/><path d="M1900 618l5 5" stroke-width="2.500"/>
<path d="M1886 632h8l-4 3z" fill="#434952"/>
<path d="M1889 643l-5 7h3v22h5v-22h3z"/><ellipse cx="1889" cy="659" rx="14" ry="6"/>
<path d="M1886 678h8l-4 3z" fill="#434952"/>
<path d="M1875 690.500h30"/><rect x="1875.500" y="697" width="7" height="7"/><rect x="1885.500" y="697" width="7" height="7"/><rect x="1895.500" y="697" width="7" height="7"/><rect x="1875.500" y="706" width="20" height="16"/><path d="M1881 709l9 5-9 5z" fill="#434952"/>
<circle cx="1903" cy="738" r="4"/>
</g>

<!-- bottom strip -->
<rect x="6" y="975" width="1908" height="5" fill="#3b4453"/>
<rect x="0" y="980" width="1918" height="37" fill="#222933"/>
<path d="M445 973.500H1100" stroke="#8a9098" stroke-width="1" opacity=".7"/>
<path d="M16 1010L28 980H102L91 1010z" fill="#3b4453"/>
<text x="37" y="1001" class="b" textLength="44" lengthAdjust="spacingAndGlyphs">Model</text>
<text x="111" y="1001" style="fill:#dfe5ec">Layout1</text><text x="193" y="1001" style="fill:#dfe5ec">Layout2</text>
<path d="M285 988v15M277.500 995.500h15" stroke="#e6e9ec" stroke-width="2"/>
<path d="M174.500 1005l6-20M257 1005l6-20M307 1005l6-20" stroke="#4e5765"/>

<!-- status bar -->
<g fill="#3b4453"><rect x="1170" y="982" width="59" height="30"/><rect x="1232" y="982" width="80" height="30"/><rect x="1315" y="982" width="129.500" height="30"/><rect x="1446" y="982" width="80.500" height="30"/><rect x="1530" y="982" width="131" height="30"/><rect x="1664" y="982" width="50" height="30"/><rect x="1715.500" y="982" width="30" height="30"/><rect x="1748.500" y="982" width="30" height="30"/><rect x="1781" y="982" width="68.500" height="30"/><rect x="1852.500" y="982" width="60.500" height="30"/></g>
<g fill="#5e90c6"><rect x="1346" y="983" width="28" height="29"/><rect x="1446.500" y="983" width="29" height="29"/><rect x="1477.500" y="983" width="28" height="29"/><rect x="1530" y="983" width="28" height="29"/></g>
<text x="1174" y="1002.500" textLength="51" lengthAdjust="spacingAndGlyphs" style="fill:#eef1f4;font-size:15px">MODEL</text>
<path d="M1238 990.500h19M1238 995.500h19M1238 1000.500h19M1242 986v19M1247.500 986v19M1252.500 986v19" stroke="#dfe2e5"/>
<path d="M1270 989h2M1275 989h2M1280 989h2M1270 995h2M1275 995h2M1280 995h2M1270 1001h2M1275 1001h2M1280 1001h2" stroke="#dfe2e5" stroke-width="2"/>
<use href="#dd" x="1302" y="996"/>
<path d="M1321 986v21h18M1321 1001h6v6" fill="none" stroke="#cfd3d8" stroke-width="1.200"/>
<circle cx="1358.500" cy="997" r="9" fill="none" stroke="#e8ebee"/><path d="M1353 1005l12-17M1356 1000h12" stroke="#e8ebee"/>
<use href="#dd" x="1385" y="996"/>
<path d="M1402 986l14 20" stroke="#d64b4b"/><path d="M1410 984v24" stroke="#4fb36a" stroke-width=".9"/><rect x="1408" y="995" width="4" height="4" fill="none" stroke="#d0d4d8"/>
<use href="#dd" x="1435" y="996"/>
<path d="M1452 1006l19-17" stroke="#e8ebee" stroke-width="1.300"/><path d="M1451 1006.500h19" stroke="#c8ccd1" stroke-width="1.500"/><rect x="1458.500" y="993.500" width="5" height="5" fill="#eef0f2"/>
<rect x="1483.500" y="987" width="17" height="20" fill="none" stroke="#eef0f2"/><rect x="1482" y="985" width="5" height="5" fill="#5e90c6" stroke="#eef0f2"/>
<use href="#dd" x="1516" y="996"/>
<path d="M1544 985l5 13 3 9-8-4-8 4 3-9z" fill="#f0f2f4"/><circle cx="1551" cy="989" r="3" fill="none" stroke="#eef0f2"/>
<path d="M1573 986l4 12 3 9-7-4-7 4 3-9z" fill="#b9bdc2"/><path d="M1581 985l-3 5h3l-2 4" fill="none" stroke="#d5d8db"/>
<path d="M1604 985l4 13 3 9-7-4-7 4 3-9z" fill="#b9bdc2"/>
<text x="1625" y="1002" style="fill:#e8ebee">1:1</text><use href="#dd" x="1651.500" y="996"/>
<g transform="translate(1679.500 997)"><circle r="4.500" fill="none" stroke="#cfd2d6" stroke-width="3.500"/><path d="M0-9v18M-9 0h18M-6.300-6.300L6.300 6.300M6.300-6.300L-6.300 6.300" stroke="#cfd2d6" stroke-width="3"/><circle r="2.800" fill="#3b4453"/></g>
<use href="#dd" x="1704" y="996"/>
<path d="M1730 987v20M1720.500 997h19" stroke="#dfe2e5" stroke-width="2.200"/>
<rect x="1753.500" y="987" width="7" height="7" fill="none" stroke="#cfd2d6"/><circle cx="1769" cy="997" r="4.500" fill="none" stroke="#cfd2d6"/><path d="M1762 1000l-4.500 8h9z" fill="none" stroke="#cfd2d6"/>
<path d="M1786 989l10-5 10 5v10l-10 2-10-2z" fill="#2f6fb0"/><path d="M1797 984v14M1790 992h14" stroke="#9cc8ea"/><rect x="1786" y="999" width="12" height="6" fill="#f0b93a"/><path d="M1793 1004l4 4 7-10" fill="none" stroke="#4fb36a" stroke-width="2.500"/>
<path d="M1820 997a9 9 0 1 1 18 0" fill="none" stroke="#d2d5d8"/><path d="M1829 989v6h4" fill="none" stroke="#d2d5d8"/><rect x="1820" y="999" width="9" height="10" fill="#d8dadc"/><rect x="1821" y="1004" width="7" height="4" fill="#f0b93a"/><circle cx="1835" cy="1004" r="4.500" fill="#4a9ae0"/><rect x="1834.500" y="1002" width="1.200" height="4.500" fill="#fff"/>
<rect x="1857.500" y="988" width="19" height="18" fill="none" stroke="#b0b4b9"/><path d="M1868 994l5-4M1871 990h3v3M1866 1000l-5 4M1861 1001v3h3" fill="none" stroke="#dfe2e5" stroke-width="1.300"/>
<path d="M1888 989h20M1888 997h20M1888 1005h20" stroke="#dfe2e5" stroke-width="2.400"/>

<!-- window frame -->
<rect width="1918" height="1" fill="#0696d7"/>
<rect x="0" y="0" width="2.500" height="980" fill="#0696d7"/>
<rect x="1916" y="0" width="2" height="800" fill="#0696d7"/>
</svg>
</body></html>
